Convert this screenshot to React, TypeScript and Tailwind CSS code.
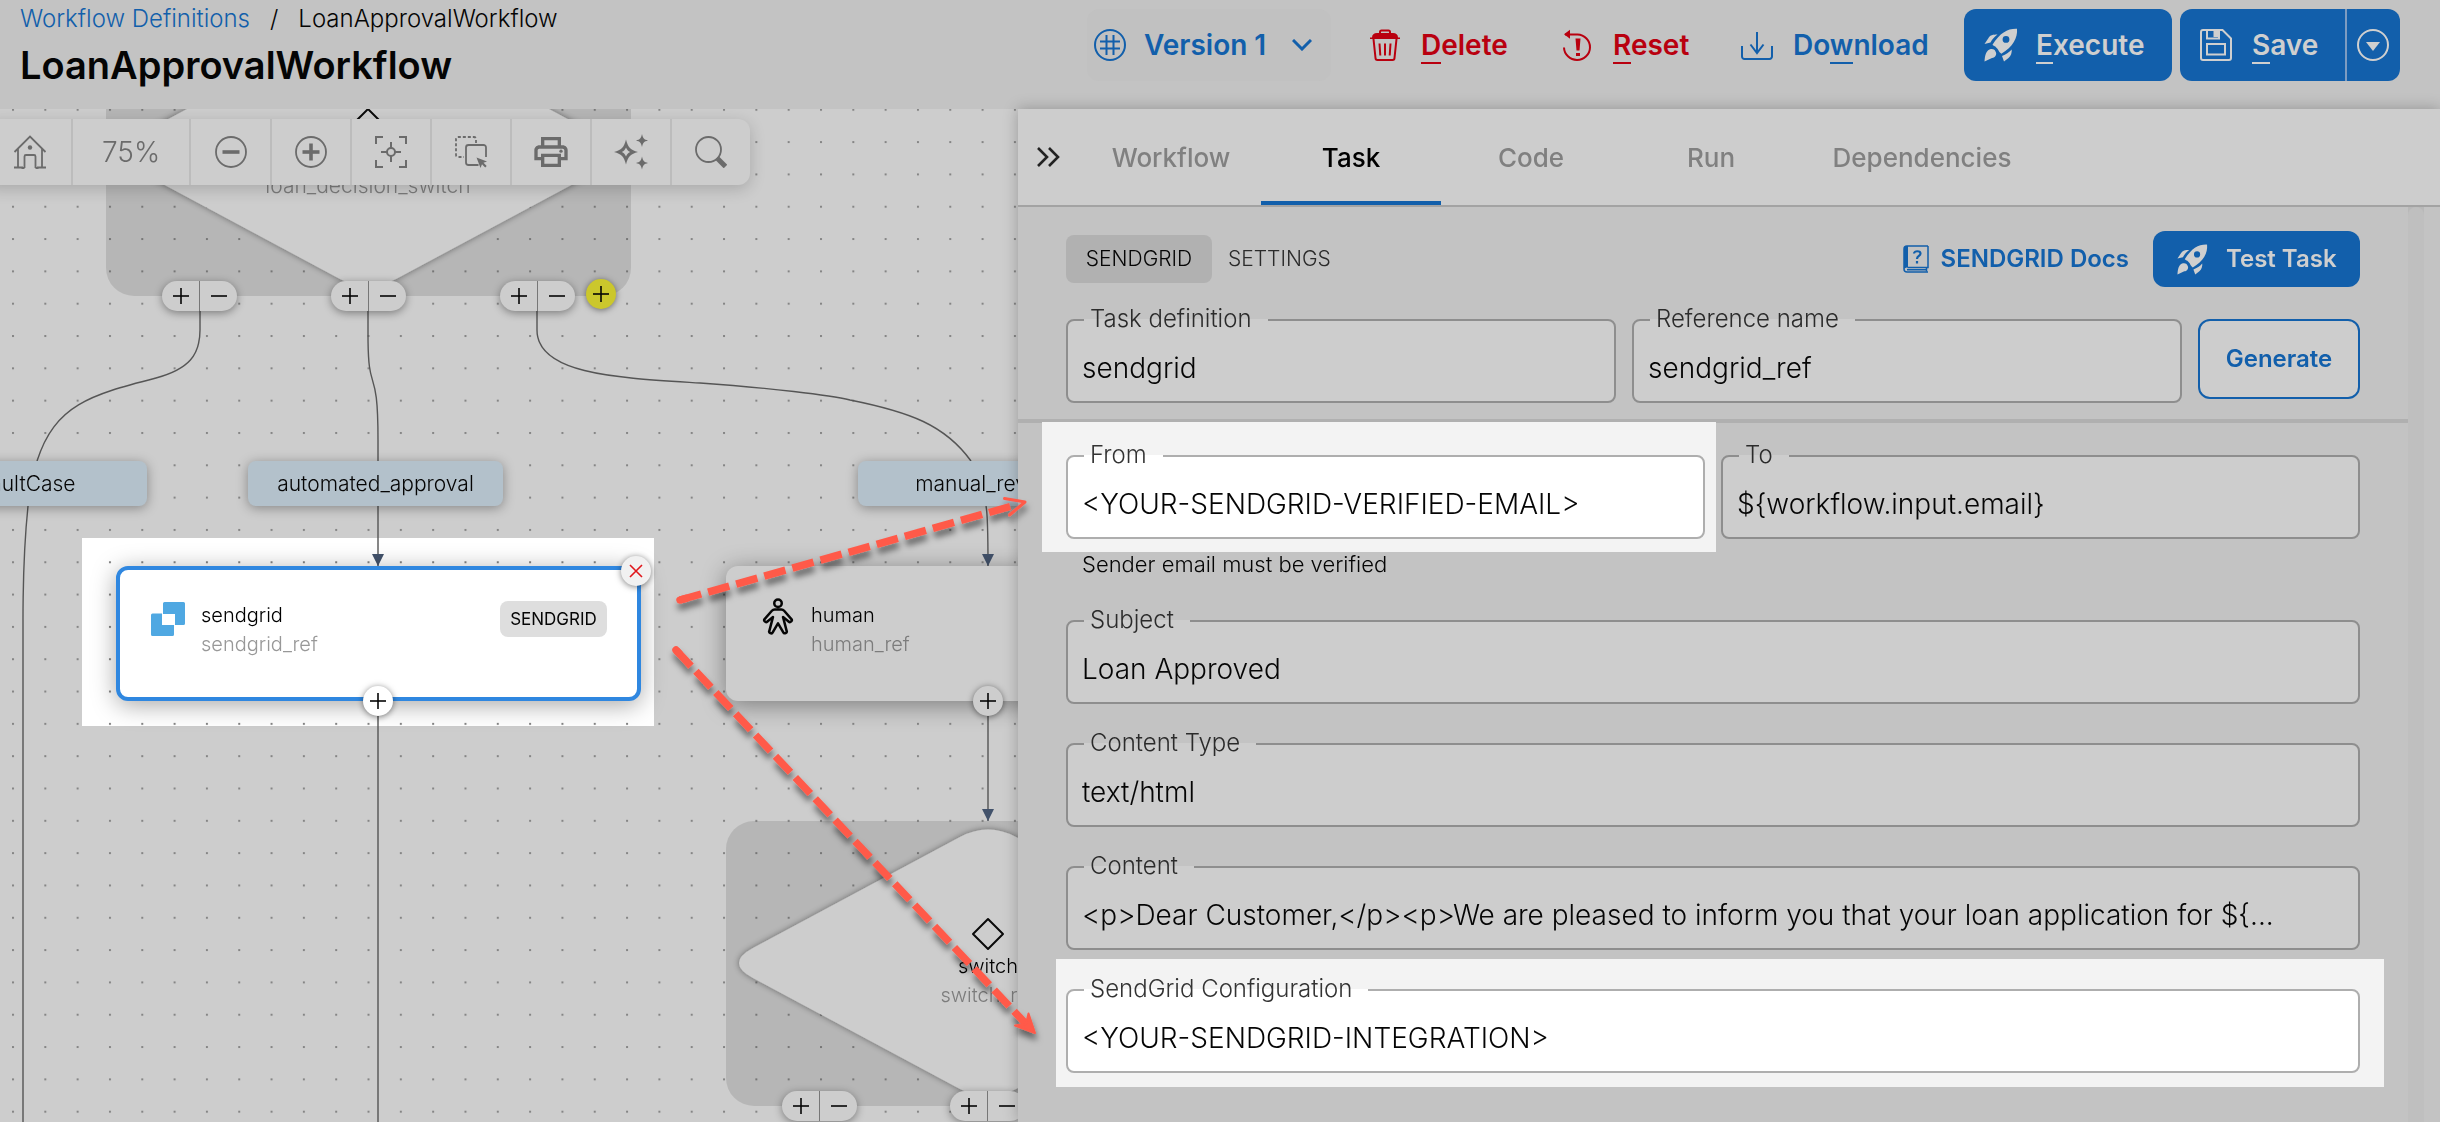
import { useId, type ReactNode } from "react";
import { MdOutlineLocalPrintshop } from "react-icons/md";
import { PiPerson } from "react-icons/pi";

/* ---------- icons ---------- */

function HashIcon() {
  return (
    <svg viewBox="0 0 32 32" className="size-8 shrink-0" fill="none" stroke="currentColor" strokeWidth="2" aria-hidden="true">
      <circle cx="16" cy="16" r="15" />
      <path d="M12.5 6v20M19.5 6v20M6 12.500h20M6 19.500h20" />
    </svg>
  );
}

function TrashIcon() {
  return (
    <svg viewBox="0 0 32 32" className="size-8 shrink-0" fill="none" stroke="currentColor" strokeWidth="2" aria-hidden="true">
      <path d="M11 4.500V3a1.500 1.500 0 0 1 1.500-1.500h7A1.500 1.500 0 0 1 21 3v1.500" />
      <path d="M3 8.500C3 5.500 5 4 8 4h16c3 0 5 1.500 5 4.500h2v1.500H1V8.500Z" fill="currentColor" stroke="none" />
      <path d="M4.500 10l2 19a2 2 0 0 0 2 2h15a2 2 0 0 0 2-2l2-19M10.500 14.500l.8 12M16 14.500v12M21.500 14.500l-.8 12" />
    </svg>
  );
}

function ResetIcon() {
  return (
    <svg viewBox="0 0 32 32" className="size-8 shrink-0" fill="none" stroke="currentColor" strokeWidth="2" aria-hidden="true">
      <path d="M4 5.500h12.500A13 12.700 0 1 1 3 18.500" />
      <path d="M3 5.200 9 .8v9Z" fill="currentColor" stroke="none" />
      <path d="M14.500 9.500h5l-1 12h-3ZM15 24h4v3h-4Z" fill="currentColor" stroke="none" />
    </svg>
  );
}

function DownloadIcon() {
  return (
    <svg viewBox="0 0 32 32" className="size-8 shrink-0" fill="none" stroke="currentColor" strokeWidth="2" aria-hidden="true">
      <path d="M16 3v21M9.500 15.500 16 24l6.500-8.500M1 17v10.500A2.500 2.500 0 0 0 3.500 30h25a2.500 2.500 0 0 0 2.500-2.500V17" />
    </svg>
  );
}

function RocketIcon({ small = false }: { small?: boolean }) {
  return (
    <svg viewBox="0 0 34 34" className={small ? "size-[31px] shrink-0" : "size-[34px] shrink-0"} fill="currentColor" aria-hidden="true">
      <path fillRule="evenodd" d="M33 .7C24 .3 16 4.500 8.500 16.800c1 1 2 1.300 2.800 1.700 1.500 1.500 3 3 3.500 4.600.5 1 1.500 2 2.500 2.700C29 18.500 33.800 10 33 .7ZM22 8a3.400 3.400 0 1 1 0 6.800A3.400 3.400 0 0 1 22 8Z" />
      <path d="M13.500 6.500C9 6.500 6 7 4.500 10L.5 16l6-1.500c1.500-3 4-5.800 7-8Z" />
      <path d="M27.700 21.500c.3 3-.7 6.500-3.200 8.500l-4.500 3.500-2-5.500c4-1.500 7-3.500 9.700-6.500Z" />
      <path d="M5.500 21.500c2.500-1 5-.5 6 2 1.800 2.500 0 6-3.500 6.500L.5 33.500C1 28 1.500 23.500 5.500 21.500Z" />
    </svg>
  );
}

function FloppyIcon() {
  return (
    <svg viewBox="0 0 32 32" className="size-8 shrink-0" fill="none" stroke="currentColor" strokeWidth="2" aria-hidden="true">
      <path d="M3 1h19.500L31 9.500V29a2 2 0 0 1-2 2H3a2 2 0 0 1-2-2V3a2 2 0 0 1 2-2Z" />
      <path d="M7 1v8.500h12V1M7 15h18v10.500H7Z" />
      <path d="M13.500 2h5v6h-5Z" fill="currentColor" stroke="none" />
    </svg>
  );
}

function CaretCircleIcon() {
  return (
    <svg viewBox="0 0 32 32" className="size-8 shrink-0" fill="none" stroke="currentColor" strokeWidth="2" aria-hidden="true">
      <circle cx="16" cy="16" r="15" />
      <path d="M9 13h14l-7 9Z" fill="currentColor" stroke="none" />
    </svg>
  );
}

function DocsIcon() {
  return (
    <svg viewBox="0 0 26 28" className="h-7 w-[26px] shrink-0" fill="none" stroke="currentColor" strokeWidth="1.500" aria-hidden="true">
      <path d="M25 1H4C2 1 1 2 1 4v20c0 2 1 3 3 3h21" />
      <path d="M25 1v21.500H4.500M23.500 22.500v4M4 24.800h19" />
      <path d="M1 3c0-1 1-2 2-2h2v21.500c-2 0-3 .5-4 1.500Z" fill="currentColor" stroke="none" />
      <path d="M11 8.500c0-3 6.500-3 6.500 0 0 2.500-3.500 2.500-3.500 5.500M14 16v2.500" strokeWidth="2.200" />
    </svg>
  );
}

function HomeIcon() {
  return (
    <svg viewBox="0 0 34 34" className="size-[34px]" fill="none" stroke="currentColor" strokeWidth="1.800" aria-hidden="true">
      <path d="M1.500 17 17 1.500 32.500 17M5 14v18M29 14v18M1 32.500h9M24 32.500h9M11.500 33V21.500a1.500 1.500 0 0 1 1.500-1.500h8a1.500 1.500 0 0 1 1.500 1.500V33M8.500 33h3M22.500 33h3" />
      <circle cx="17" cy="12.500" r="2.200" fill="currentColor" stroke="none" />
    </svg>
  );
}

function ZoomCircleIcon({ plus = false }: { plus?: boolean }) {
  return (
    <svg viewBox="0 0 32 32" className="size-8" fill="none" stroke="currentColor" strokeWidth="1.800" aria-hidden="true">
      <circle cx="16" cy="16" r="15" />
      <path d="M7.500 16h17" strokeWidth="3.600" />
      {plus && <path d="M16 7.500v17" strokeWidth="3.600" />}
    </svg>
  );
}

function FocusIcon() {
  return (
    <svg viewBox="0 0 32 32" className="size-8" fill="none" stroke="currentColor" strokeWidth="2" aria-hidden="true">
      <path d="M1 8V1h7M24 1h7v7M31 24v7h-7M8 31H1v-7" />
      <circle cx="16" cy="16" r="4" />
      <path d="M16 6v6M16 20v6M6 16h6M20 16h6" />
    </svg>
  );
}

function SelectIcon() {
  return (
    <svg viewBox="0 0 32 32" className="size-8" fill="none" stroke="currentColor" strokeWidth="1.800" aria-hidden="true">
      <path d="M21 7V3a2 2 0 0 0-2-2H3a2 2 0 0 0-2 2v16a2 2 0 0 0 2 2h6" strokeDasharray="3 2" />
      <path d="M31 21V11.500A2.500 2.500 0 0 0 28.500 9h-15a2.500 2.500 0 0 0-2.500 2.500v15a2.500 2.500 0 0 0 2.500 2.500h10" />
      <path d="m21.500 21.500 10.500 4-3.500 1.300 3.200 3.200-1.500 1.500-3.200-3.200-1.500 3.700Z" fill="currentColor" stroke="none" />
    </svg>
  );
}

function SparklesIcon() {
  return (
    <svg viewBox="0 0 34 36" className="h-9 w-[34px]" fill="currentColor" aria-hidden="true">
      <path fillRule="evenodd" d="M12 5.500c2 8 4.500 10.500 12 12.500-7.500 2-10 4.500-12 12.500C10 22.500 7.500 20 0 18c7.500-2 10-4.500 12-12.500Zm0 8c-1 2.500-2 3.500-4.200 4.500 2.200 1 3.200 2 4.200 4.500 1-2.500 2-3.500 4.200-4.500-2.200-1-3.200-2-4.200-4.500Z" />
      <path d="M28 0c1 4.500 2 5.500 6 6.500-4 1-5 2-6 6.500-1-4.500-2-5.500-6-6.500 4-1 5-2 6-6.500ZM28 22.500c1 4.500 2 5.500 6 6.500-4 1-5 2-6 6.500-1-4.500-2-5.500-6-6.500 4-1 5-2 6-6.500Z" />
    </svg>
  );
}

function SearchIcon() {
  return (
    <svg viewBox="0 0 32 32" className="size-8" fill="none" stroke="currentColor" strokeWidth="1.800" aria-hidden="true">
      <circle cx="13.500" cy="13.500" r="12.500" />
      <path d="m22 22 8.500 8.500" strokeWidth="5" />
    </svg>
  );
}

function SendgridIcon() {
  return (
    <svg viewBox="0 0 36 36" className="size-9 shrink-0" fill="#4fa8e2" aria-hidden="true">
      <path d="M1 14a1.500 1.500 0 0 1 1.500-1.500H12V24h12v9.500a1.500 1.500 0 0 1-1.500 1.500h-20A1.500 1.500 0 0 1 1 33.500Z" />
      <path d="M13 2.500A1.500 1.500 0 0 1 14.500 1h19A1.500 1.500 0 0 1 35 2.500v20a1.500 1.500 0 0 1-1.500 1.500H25V13H13Z" />
    </svg>
  );
}

function Glyph({ kind }: { kind: "plus" | "minus" | "cross" }) {
  return (
    <svg viewBox="0 0 16 16" className="size-4" fill="none" stroke="currentColor" strokeWidth="1.600" aria-hidden="true">
      {kind === "cross" ? <path d="m2 2 12 12M14 2 2 14" /> : <path d="M0 8h16" />}
      {kind === "plus" && <path d="M8 0v16" />}
    </svg>
  );
}

/* ---------- header ---------- */

function Key({ children }: { children: ReactNode }) {
  return <span className="border-b-2 border-current">{children}</span>;
}

function Header() {
  return (
    <header className="flex h-[109px] shrink-0 items-start justify-between bg-[#c3c3c3] pr-10 pl-5">
      <div>
        <nav aria-label="Breadcrumb" className="flex h-[38px] items-center gap-5 text-[24px] font-light">
          <a href="#definitions" className="text-[#125fab]">Workflow Definitions</a>
          <span aria-hidden="true">/</span>
          <span>LoanApprovalWorkflow</span>
        </nav>
        <h1 className="text-[38px] leading-[54px] font-semibold">LoanApprovalWorkflow</h1>
      </div>
      <div className="mt-[9px] flex h-[72px] shrink-0 text-[28px] font-semibold whitespace-nowrap">
        <button type="button" className="flex w-[244px] items-center gap-[18px] rounded-xl bg-[#c1c1c1] pl-[7px] text-[#125fab]">
          <HashIcon />
          Version 1
          <svg viewBox="0 0 20 12" className="ml-2 h-3 w-5" fill="none" stroke="currentColor" strokeWidth="3" aria-hidden="true">
            <path d="m1 1 9 9 9-9" />
          </svg>
        </button>
        <button type="button" className="ml-[38px] flex w-[139px] items-center gap-5 text-[#b9000f]">
          <TrashIcon />
          <span><Key>D</Key>elete</span>
        </button>
        <button type="button" className="ml-[53px] flex w-[127px] items-center gap-5 text-[#b9000f]">
          <ResetIcon />
          <span><Key>R</Key>eset</span>
        </button>
        <button type="button" className="ml-[53px] flex w-[189px] items-center gap-5 text-[#125fab]">
          <DownloadIcon />
          <span>Do<Key>w</Key>nload</span>
        </button>
        <button type="button" className="ml-[34px] flex w-[208px] items-center gap-[18px] rounded-xl bg-[#125fab] pl-5 text-[#cfcfcf]">
          <RocketIcon />
          <span><Key>E</Key>xecute</span>
        </button>
        <div className="ml-2 flex overflow-hidden rounded-xl bg-[#125fab] text-[#cfcfcf]">
          <button type="button" className="flex w-[165px] items-center gap-5 pl-5">
            <FloppyIcon />
            <span><Key>S</Key>ave</span>
          </button>
          <button type="button" aria-label="More save options" className="flex w-[55px] items-center border-l-2 border-[#7d9cc2] pl-[10px]">
            <CaretCircleIcon />
          </button>
        </div>
      </div>
    </header>
  );
}

/* ---------- canvas ---------- */

function ToolButton({ label, className = "w-20", children }: { label: string; className?: string; children: ReactNode }) {
  return (
    <button type="button" aria-label={label} className={`flex items-center justify-center ${className}`}>
      {children}
    </button>
  );
}

function CanvasToolbar() {
  return (
    <div className="absolute top-[10px] -left-3 z-10 flex h-[66px] divide-x-2 divide-[#bcbcbc] rounded-r-xl bg-[#cdcdcd] text-[#6b6b6b] shadow-[0_4px_16px_rgba(0,0,0,0.18)]">
      <ToolButton label="Home" className="w-[85px]"><HomeIcon /></ToolButton>
      <ToolButton label="Zoom level" className="w-[118px] text-[28px] font-light">75%</ToolButton>
      <ToolButton label="Zoom out" className="w-[81px]"><ZoomCircleIcon /></ToolButton>
      <ToolButton label="Zoom in"><ZoomCircleIcon plus /></ToolButton>
      <ToolButton label="Fit to screen"><FocusIcon /></ToolButton>
      <ToolButton label="Select area"><SelectIcon /></ToolButton>
      <ToolButton label="Print"><MdOutlineLocalPrintshop className="size-10" /></ToolButton>
      <ToolButton label="Assistant"><SparklesIcon /></ToolButton>
      <ToolButton label="Search" className="w-[78px]"><SearchIcon /></ToolButton>
    </div>
  );
}

const DIAMOND =
  "M960 837Q988 822 1016 837L1223 948Q1251 963 1223 978L1016 1089Q988 1104 960 1089L753 978Q725 963 753 948Z";

function CanvasDrawing() {
  return (
    <svg viewBox="0 109 1260 1013" className="absolute top-0 left-0 h-[1013px] w-[1260px]" fill="none" aria-hidden="true">
      <defs>
        <pattern id="dots" x="12" y="302.700" width="32.320" height="32.320" patternUnits="userSpaceOnUse">
          <rect width="2" height="2" fill="#858585" />
        </pattern>
        <filter id="soft" x="-20%" y="-20%" width="140%" height="140%">
          <feDropShadow dx="0" dy="0" stdDeviation="3" floodColor="#000" floodOpacity="0.450" />
        </filter>
      </defs>
      <rect x="82" y="538" width="572" height="188" fill="#fff" />
      <rect x="0" y="109" width="1260" height="1013" fill="url(#dots)" />
      <g fill="#000" fillOpacity="0.110">
        <rect x="106" y="11" width="525" height="285" rx="28" />
        <rect x="726" y="821" width="525" height="285" rx="28" />
      </g>
      <g fill="#cdcdcd" filter="url(#soft)">
        <path d={DIAMOND} />
        <path d={DIAMOND} transform="translate(-620 -810)" />
      </g>
      <g stroke="#0a0a0a" strokeWidth="2" strokeLinejoin="round">
        <path d="m988 919 15 15-15 15-15-15Z" />
        <path d="m368 109 15 15-15 15-15-15Z" />
      </g>
      <g stroke="#555" strokeWidth="1.400">
        <path d="M200 296V330C200 355 189 369 156 378C90 395 55 405 37 461" />
        <path d="M28 506C24 545 23 570 23 620V1122" />
        <path d="M368 296V335C368 400 378 360 378 440V566M378 701V1122" />
        <path d="M537 296V330C537 375 620 378 700 383C770 388 830 395 850 400C910 412 945 425 971 461" />
        <path d="M986 506C988 515 988 530 988 566M988 701V821" />
      </g>
      <path d="M372 554h12l-6 12ZM982 554h12l-6 12ZM982 809h12l-6 12Z" fill="#42526b" />
    </svg>
  );
}

function CaseLabel({ children, className }: { children: ReactNode; className: string }) {
  return (
    <div className={`absolute top-[352px] flex h-[45px] items-center justify-center rounded-lg bg-[#b3c1cb] text-[21px] font-light shadow-[0_2px_12px_rgba(0,0,0,0.35)] ${className}`}>
      {children}
    </div>
  );
}

function BranchPill({ className }: { className: string }) {
  return (
    <div className={`absolute flex h-[30px] w-[75px] divide-x divide-[#777] rounded-full bg-[#cdcdcd] shadow-[0_2px_8px_rgba(0,0,0,0.4)] ${className}`}>
      <button type="button" aria-label="Add branch" className="flex flex-1 items-center justify-center"><Glyph kind="plus" /></button>
      <button type="button" aria-label="Remove branch" className="flex flex-1 items-center justify-center"><Glyph kind="minus" /></button>
    </div>
  );
}

function RoundButton({ label, kind, className }: { label: string; kind: "plus" | "cross"; className: string }) {
  return (
    <button type="button" aria-label={label} className={`absolute flex size-[30px] items-center justify-center rounded-full shadow-[0_1px_6px_rgba(0,0,0,0.5)] ${className}`}>
      <Glyph kind={kind} />
    </button>
  );
}

function Canvas() {
  return (
    <section aria-label="Workflow diagram" className="relative min-w-0 overflow-hidden bg-[#cdcdcd]">
      <CanvasDrawing />
      <div className="absolute top-[65px] left-[218px] w-[300px] text-center text-[21px] leading-6 font-light text-[#7c7c7c]">loan_decision_switch</div>
      <CanvasToolbar />

      <BranchPill className="top-[172px] left-[162px]" />
      <BranchPill className="top-[172px] left-[331px]" />
      <BranchPill className="top-[172px] left-[500px]" />
      <RoundButton label="Add case" kind="plus" className="top-[170px] left-[586px] bg-[#cbc72c]" />

      <CaseLabel className="-left-[113px] w-[260px]">defaultCase</CaseLabel>
      <CaseLabel className="left-[248px] w-[255px]">automated_approval</CaseLabel>
      <CaseLabel className="left-[858px] w-[260px]">manual_review</CaseLabel>

      <article className="absolute top-[457px] left-[116px] flex h-[135px] w-[525px] items-start rounded-xl border-4 border-[#2f87e0] bg-white pt-[31px] pr-[30px] pl-[30px] text-[20px] leading-[29px] font-light shadow-[0_4px_24px_rgba(0,0,0,0.35)]">
        <SendgridIcon />
        <div className="ml-[15px] flex-1">
          <div className="text-black">sendgrid</div>
          <div className="text-[#989898]">sendgrid_ref</div>
        </div>
        <span className="flex h-9 w-[107px] items-center justify-center rounded-lg bg-[#dedede] text-[17px] font-normal">SENDGRID</span>
      </article>
      <RoundButton label="Delete task" kind="cross" className="top-[447px] left-[621px] bg-[#f1f1f1] text-[#e0161b]" />
      <RoundButton label="Add task after sendgrid" kind="plus" className="top-[577px] left-[363px] bg-white" />

      <article className="absolute top-[457px] left-[726px] flex h-[135px] w-[525px] items-start rounded-xl bg-[#cdcdcd] pt-[35px] pl-8 text-[20px] leading-[29px] font-light shadow-[0_4px_24px_rgba(0,0,0,0.4)]">
        <PiPerson className="-mt-1 size-10 shrink-0" />
        <div className="ml-[13px]">
          <div className="text-black">human</div>
          <div className="text-[#7c7c7c]">human_ref</div>
        </div>
      </article>
      <RoundButton label="Add task after human" kind="plus" className="top-[577px] left-[973px] bg-[#cdcdcd]" />

      <div className="absolute top-[843px] left-[838px] w-[300px] text-center text-[20px] leading-[29px] font-light">
        <div className="text-black">switch</div>
        <div className="text-[#7c7c7c]">switch_ref</div>
      </div>
      <BranchPill className="top-[982px] left-[782px]" />
      <BranchPill className="top-[982px] left-[950px]" />
    </section>
  );
}

/* Callout arrows that run from the diagram onto the form panel. */
function CalloutArrows() {
  return (
    <svg viewBox="0 109 1060 1013" className="pointer-events-none absolute top-0 left-0 z-20 h-[1013px] w-[1060px]" fill="none" stroke="#ff5a4a" aria-hidden="true">
      <defs>
        <filter id="arrowShadow" x="-10%" y="-10%" width="120%" height="125%">
          <feDropShadow dx="1" dy="6" stdDeviation="3" floodColor="#000" floodOpacity="0.500" />
        </filter>
      </defs>
      <g filter="url(#arrowShadow)" strokeWidth="7.500">
        <path d="M680 600 1012 506" strokeDasharray="22 7.200" />
        <path d="M676 650 1026 1024" strokeDasharray="22 7.100" />
        <path d="M680 600l6-1.700M676 650l3 3.200" strokeLinecap="round" />
        <path d="M1004.500 498.500 1025 502 1009.500 515" strokeWidth="3" strokeLinecap="round" strokeLinejoin="round" />
        <path d="M1028.500 1013.500 1035 1033 1015 1025.500 1026 1024Z" fill="#ff5a4a" strokeWidth="2" strokeLinejoin="round" />
      </g>
    </svg>
  );
}

/* ---------- task panel ---------- */

function Field({ label, value, highlighted = false }: { label: string; value: string; highlighted?: boolean }) {
  const id = useId();
  return (
    <div className="relative min-w-0 flex-1">
      <label
        htmlFor={id}
        className={`absolute -top-[15px] left-[18px] isolate pr-4 pl-[6px] text-[24px] leading-[30px] font-light whitespace-nowrap before:absolute before:inset-x-0 before:top-[15px] before:-z-10 before:h-[2px] ${
          highlighted ? "text-[#333] before:bg-white" : "text-[#2b2b2b] before:bg-[#cdcdcd]"
        }`}
      >
        {label}
      </label>
      <input
        id={id}
        type="text"
        defaultValue={value}
        className={`block h-[84px] w-full rounded-lg border-2 pt-[14px] pr-4 pl-[14px] text-[28px] font-light outline-none ${
          highlighted ? "border-[#aeaeae] bg-white" : "border-[#8e8e8e] bg-[#cdcdcd]"
        }`}
      />
    </div>
  );
}

const TABS = [
  { name: "Workflow", width: "w-[180px]" },
  { name: "Task", width: "w-[180px]" },
  { name: "Code", width: "w-[180px]" },
  { name: "Run", width: "w-[180px]" },
  { name: "Dependencies", width: "w-[242px]" },
];

function TaskPanel() {
  return (
    <section aria-label="Task editor" className="relative z-10 flex min-w-0 flex-col bg-[#c3c3c3] shadow-[0_0_14px_rgba(0,0,0,0.25)]">
      <div className="flex h-[98px] shrink-0 items-stretch border-b-2 border-[#a3a3a3] bg-[#cdcdcd]">
        <button type="button" aria-label="Collapse panel" className="flex w-[63px] items-center pl-[18px]">
          <svg viewBox="0 0 24 20" className="h-5 w-6" fill="none" stroke="#222" strokeWidth="2.600" aria-hidden="true">
            <path d="m2 1 9 9-9 9M13 1l9 9-9 9" />
          </svg>
        </button>
        <div role="tablist" className="flex">
          {TABS.map((tab) => (
            <button
              key={tab.name}
              type="button"
              role="tab"
              aria-selected={tab.name === "Task"}
              className={`${tab.width} border-b-4 pt-1 text-[26px] font-medium ${
                tab.name === "Task" ? "border-[#125fab] text-black" : "border-transparent text-[#808080]"
              }`}
            >
              {tab.name}
            </button>
          ))}
        </div>
      </div>

      <div className="flex flex-1">
        <div className="min-w-0 flex-1">
          <div className="border-b-4 border-[#b0b0b0] px-12 pt-6 pb-4">
            <div className="flex items-center justify-between">
              <div className="flex text-[21px] font-light">
                <button type="button" className="h-12 w-[146px] rounded-lg bg-[#b1b1b1]">SENDGRID</button>
                <button type="button" className="h-12 px-4 text-[#2b2b2b]">SETTINGS</button>
              </div>
              <div className="flex items-center gap-6 text-[24px] font-semibold">
                <a href="#docs" className="flex items-center gap-3 text-[#125fab]"><DocsIcon />SENDGRID Docs</a>
                <button type="button" className="flex h-14 w-[207px] items-center gap-[18px] rounded-xl bg-[#125fab] pl-6 text-[#cfcfcf]">
                  <RocketIcon small />
                  Test Task
                </button>
              </div>
            </div>
            <div className="mt-8 flex items-start gap-4">
              <Field label="Task definition" value="sendgrid" />
              <Field label="Reference name" value="sendgrid_ref" />
              <button type="button" className="h-20 w-[162px] rounded-xl border-2 border-[#125fab] bg-[#cdcdcd] text-[24px] font-semibold text-[#125fab]">
                Generate
              </button>
            </div>
          </div>

          <div className="flex flex-col gap-[39px] px-12 pt-8 pb-8">
            <div>
              <div className="relative isolate flex gap-4">
                <div className="relative flex min-w-0 flex-1">
                  <div className="absolute -top-[33px] -right-[11px] -bottom-[13px] -left-6 -z-10 bg-[#f3f3f3]" />
                  <Field label="From" value="<YOUR-SENDGRID-VERIFIED-EMAIL>" highlighted />
                </div>
                <Field label="To" value="${workflow.input.email}" />
              </div>
              <p className="mt-2 pl-4 text-[22px] leading-[34px] font-light">Sender email must be verified</p>
            </div>
            <Field label="Subject" value="Loan Approved" />
            <Field label="Content Type" value="text/html" />
            <Field label="Content" value="<p>Dear Customer,</p><p>We are pleased to inform you that your loan application for ${..." />
            <div className="relative isolate">
              <div className="absolute -top-[30px] -right-6 -bottom-[14px] -left-[10px] -z-10 bg-[#f3f3f3]" />
              <Field label="SendGrid Configuration" value="<YOUR-SENDGRID-INTEGRATION>" highlighted />
            </div>
          </div>
        </div>
        <div className="w-4 bg-[#b8b8b8]">
          <div className="h-full rounded-t-full bg-[#bfbfbf]" />
        </div>
        <div className="w-4" />
      </div>
    </section>
  );
}

export default function App() {
  return (
    <div className="flex min-h-screen flex-col overflow-hidden bg-[#c3c3c3] font-['Inter',sans-serif] text-[#050505]">
      <Header />
      <main className="relative grid flex-1 grid-cols-[1018fr_1422fr]">
        <Canvas />
        <TaskPanel />
        <CalloutArrows />
      </main>
    </div>
  );
}
